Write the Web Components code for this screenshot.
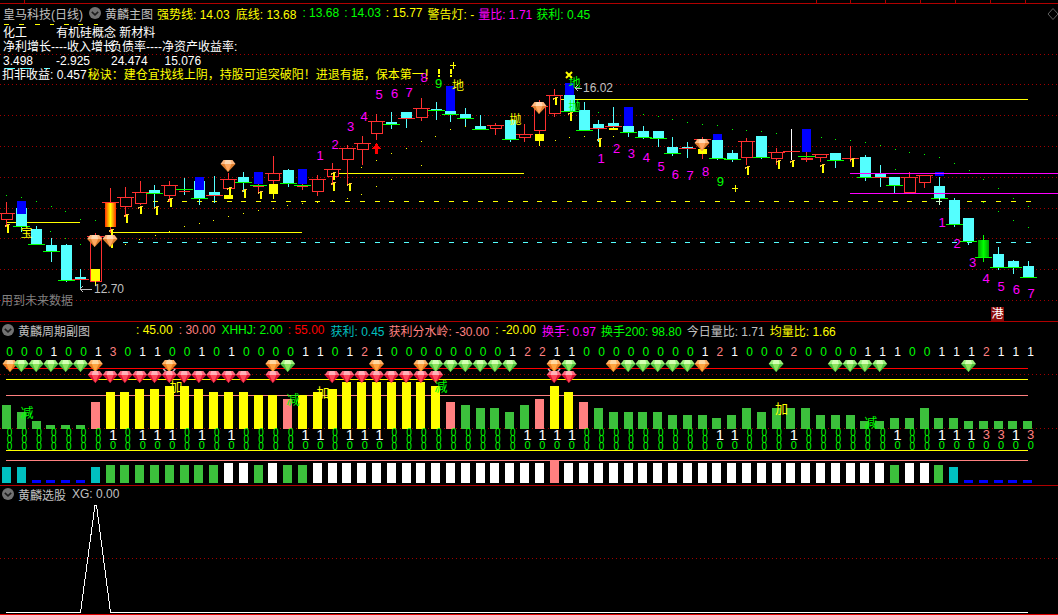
<!DOCTYPE html>
<html lang="zh-CN">
<head>
<meta charset="utf-8">
<title>皇马科技</title>
<style>
  html, body { margin: 0; background: #000; overflow: hidden; }
  body { font: 12px "Liberation Sans", "Noto Sans CJK SC", sans-serif; }
</style>
</head>
<body>
<stock-terminal>
  <chart-panel h="321">
    <legend-bar slot="legend" top="4" left="3">
      <legend-item color="#c0c0c0">皇马科技(日线)</legend-item>
      <status-icon></status-icon>
      <legend-item color="#c0c0c0" style="margin-left:-2px">黄麟主图</legend-item>
      <legend-item color="#ffff00" style="margin-left:-2px">强势线: 14.03</legend-item>
      <legend-item color="#ffff00">底线: 13.68</legend-item>
      <legend-item color="#00ff00">: 13.68</legend-item>
      <legend-item color="#00ff00" style="margin-left:-1px">: 14.03</legend-item>
      <legend-item color="#ffff00" style="margin-left:-1px">: 15.77</legend-item>
      <legend-item color="#ffff00" style="margin-left:-1px">警告灯: -</legend-item>
      <legend-item color="#ff00ff" style="margin-left:-2px">量比: 1.71</legend-item>
      <legend-item color="#00ff00" style="margin-left:-2px">获利: 0.45</legend-item>
    </legend-bar>
    <info-block slot="legend"></info-block>
    <kline-chart></kline-chart>
  </chart-panel>
  <chart-panel h="164" line="#b00000">
    <legend-bar slot="legend" top="0" left="2">
      <status-icon></status-icon>
      <legend-item color="#c0c0c0" style="margin-left:-2px">黄麟周期副图</legend-item>
      <legend-item color="#ffff00" style="margin-left:40px">: 45.00</legend-item>
      <legend-item color="#ff8080">: 30.00</legend-item>
      <legend-item color="#00ff00">XHHJ: 2.00</legend-item>
      <legend-item color="#ff0000" style="margin-left:-1px">: 55.00</legend-item>
      <legend-item color="#00c0c0">获利: 0.45</legend-item>
      <legend-item color="#ff8080" style="margin-left:-2px">获利分水岭: -30.00</legend-item>
      <legend-item color="#ffff00">: -20.00</legend-item>
      <legend-item color="#ff00ff">换手: 0.97</legend-item>
      <legend-item color="#00ff00" style="margin-left:-1px">换手200: 98.80</legend-item>
      <legend-item color="#c0c0c0" style="margin-left:-1px">今日量比: 1.71</legend-item>
      <legend-item color="#ffff00" style="margin-left:-1px">均量比: 1.66</legend-item>
    </legend-bar>
    <cycle-chart></cycle-chart>
  </chart-panel>
  <chart-panel h="130" line="#b00000">
    <legend-bar slot="legend" top="0" left="2">
      <status-icon></status-icon>
      <legend-item color="#c0c0c0" style="margin-left:-2px">黄麟选股</legend-item>
      <legend-item color="#c0c0c0">XG: 0.00</legend-item>
    </legend-bar>
    <signal-chart></signal-chart>
  </chart-panel>
</stock-terminal>

<script>
const STEP = 14.8
const FONT = '"Liberation Sans", "Noto Sans CJK SC", sans-serif'

const rect = (x, y, w, h, fill) => `<rect x="${x}" y="${y}" width="${w}" height="${h}" fill="${fill}"/>`
const hline = (y, x1, x2, color) => `<path d="M${x1} ${Math.floor(y) + 0.5}H${x2}" stroke="${color}"/>`
const vline = (x, y1, y2, color) => `<path d="M${x} ${y1}V${y2}" stroke="${color}"/>`
const dotted = (y) => `<path d="M0 ${y + 0.5}H1058" stroke="#a00000" stroke-dasharray="1 3"/>`
const label = (x, y, s, color, size) =>
  `<text x="${x}" y="${y}" fill="${color}" font-size="${size || 12}" text-anchor="middle" dominant-baseline="central">${s}</text>`

const GEMS = {
  green: ['#d4ffb4', '#9cf07c', '#4cc03c', '#8ce45c'],
  red: ['#ffb0b8', '#ff6a80', '#dc1030', '#ff4858'],
  orange: ['#ffd8a0', '#ffb468', '#e87c20', '#ffa440'],
  pale: ['#ffd8b0', '#ffb880', '#e08030', '#ffa860'],
}

function gem(x, y, type, cap) {
  const c = GEMS[type]
  let s = `<g transform="translate(${x} ${y})" shape-rendering="auto">`
  if (cap) {
    s += '<path d="M-6 3L0 9L6 3" fill="none" stroke="#c0c0c0" stroke-width="1.5"/>'
    s += '<path d="M-5 -4Q0 -9 5 -4Z" fill="#e8e8e8"/>'
  }
  s += `<polygon points="-4.5,-6 4.5,-6 7.5,-2 -7.5,-2" fill="${c[1]}"/>`
  s += `<polygon points="-2.5,-6 2.5,-6 3.5,-2 -3.5,-2" fill="${c[0]}"/>`
  s += `<polygon points="-7.5,-2 7.5,-2 0,6" fill="${c[2]}"/>`
  s += `<polygon points="-3.5,-2 3.5,-2 0,6" fill="${c[3]}"/>`
  return s + '</g>'
}

/* kind: c = cyan + green foot, r = cyan + red foot, h = hollow red, b = blue only */
const CANDLES = [
  ['h', 213, 219, 202, 227],
  ['c', 208, 226, 201, 232, { blue: [201, 214] }],
  ['c', 229, 244, 226, 245],
  ['c', 245, 251, 238, 262],
  ['c', 245, 280, 244, 282],
  ['r', 277, 279, 269, 290],
  ['h', 236, 281, 233, 281, { yellow: [269, 281], yw: 286 }],
  ['fire', 202, 227, 188, 233],
  ['h', 197, 206, 187, 217],
  ['h', 192, 203, 181, 205],
  ['c', 190, 193, 185, 208],
  ['h', 185, 195, 181, 202],
  ['doji', 189, 190, 178, 195],
  ['c', 181, 198, 177, 205, { blue: [177, 190] }],
  ['r', 192, 195, 176, 203],
  ['h', 179, 188, 173, 188, { yellow: [195, 199] }],
  ['c', 177, 182, 172, 192],
  ['b', 172, 184, 172, 193],
  ['h', 173, 180, 156, 184, { yellow: [184, 194], yw: 199 }],
  ['c', 170, 183, 169, 187],
  ['b', 169, 184, 169, 190],
  ['h', 179, 191, 175, 196],
  ['h', 169, 176, 163, 185],
  ['h', 148, 159, 145, 185],
  ['h', 143, 149, 136, 165],
  ['h', 121, 133, 114, 140],
  ['c', 122, 124, 112, 129],
  ['r', 112, 118, 112, 128],
  ['h', 108, 117, 98, 121],
  ['c', 109, 110, 102, 120],
  ['c', 111, 114, 86, 122, { blue: [86, 111] }],
  ['c', 114, 118, 108, 126],
  ['c', 126, 129, 115, 129],
  ['h', 125, 128, 123, 135],
  ['c', 120, 139, 120, 142],
  ['h', 134, 137, 124, 142],
  ['h', 106, 130, 100, 134, { yellow: [134, 141], yw: 146 }],
  ['h', 95, 113, 89, 117],
  ['c', 95, 111, 83, 112, { blue: [83, 95] }],
  ['c', 110, 130, 102, 130],
  ['r', 124, 128, 120, 142],
  ['r', 123, 126, 107, 128, { yellow: [128, 130] }],
  ['c', 126, 132, 107, 137, { blue: [107, 126] }],
  ['c', 131, 137, 126, 139],
  ['c', 131, 138, 131, 147],
  ['c', 147, 153, 137, 156],
  ['r', 147, 148, 142, 158],
  ['top', 139, 149, 137, 159, { yellow: [149, 154] }],
  ['c', 140, 158, 134, 160, { blue: [134, 140] }],
  ['c', 153, 159, 150, 162],
  ['h', 141, 157, 138, 165],
  ['c', 136, 157, 136, 159],
  ['h', 152, 158, 148, 165],
  ['mark', 151, 151, 129, 160],
  ['b', 129, 152, 129, 162, { foot: 156, small: [158, 159] }],
  ['h', 154, 157, 154, 162],
  ['c', 153, 160, 153, 168],
  ['top', 158, 162, 146, 162],
  ['c', 157, 177, 155, 181],
  ['r', 174, 177, 165, 187],
  ['c', 177, 185, 177, 193],
  ['h', 177, 192, 172, 192],
  ['h', 175, 182, 175, 188],
  ['c', 186, 198, 177, 205, { blue: [172, 176] }],
  ['c', 200, 224, 198, 227],
  ['c', 218, 241, 218, 245],
  ['grass', 240, 257, 235, 262],
  ['c', 254, 267, 247, 270],
  ['c', 261, 267, 260, 274],
  ['c', 266, 277, 261, 277],
]

const RED = '#ff3030'
const CYAN = '#54ffff'
const LIME = '#00ff00'
const YELLOW = '#ffff00'

function candle(d, i) {
  const [kind, top, bot, wt, wb, ex = {}] = d
  const x = Math.round(6.3 + STEP * i) + 0.5
  const left = x - 5.5
  let wick = CYAN
  if (kind === 'h' || kind === 'top' || kind === 'fire' || kind === 'b') wick = RED
  if (kind === 'grass') wick = LIME
  if (kind === 'mark') wick = '#ffffff'
  let s = vline(x, wt, wb, wick)
  if (kind === 'c' || kind === 'r') {
    s += rect(left, top, 11, bot - top, CYAN)
    s += hline(bot, x - 8.5, x + 8.5, kind === 'c' ? LIME : RED)
  } else if (kind === 'h') {
    s += `<rect x="${left}" y="${top + 0.5}" width="11" height="${bot - top}" fill="#000" stroke="${RED}"/>`
    s += hline(top, x - 8.5, x + 8.5, RED)
  } else if (kind === 'fire') {
    s += rect(left, top, 11, bot - top, 'url(#fire)')
    s += hline(top, x - 8.5, x + 8.5, RED)
  } else if (kind === 'grass') {
    s += rect(left, top, 11, bot - top, 'url(#grass)')
    s += hline(bot, x - 8.5, x + 8.5, LIME)
  } else if (kind === 'doji') {
    s += hline(top, x - 8.5, x + 8.5, LIME)
    s += hline(bot + 1, x - 5.5, x + 5.5, RED)
  } else if (kind === 'top' || kind === 'mark') {
    s += hline(top, x - 8.5, x + 8.5, RED)
  } else if (kind === 'b') {
    s += rect(left + 1, top, 9, bot - top, '#0000ff')
    s += hline(ex.foot || bot + 1, x - 8.5, x + 8.5, LIME)
    if (!ex.foot) s += hline(bot + 2, x - 5.5, x + 5.5, RED)
  }
  if (ex.blue) s += rect(left + 1, ex.blue[0], 9, ex.blue[1] - ex.blue[0], '#0000ff')
  if (ex.small) s += `<rect x="${left}" y="${ex.small[0]}.5" width="11" height="${ex.small[1] - ex.small[0]}" fill="none" stroke="${RED}"/>`
  if (ex.yellow) s += rect(left + 1, ex.yellow[0], 9, ex.yellow[1] - ex.yellow[0], YELLOW)
  if (ex.yw) s += vline(x, ex.yellow[1], ex.yw, YELLOW)
  return s
}

const ARROWS = [
  [8.4, 224, 233], [127, 214, 223], [141, 206, 214], [156.5, 206, 215], [171.4, 198, 207],
  [230, 187, 195], [245, 189, 198], [260.6, 191, 199], [334, 172, 180], [334, 182, 191],
  [349.5, 183, 191], [112, 229, 238], [112, 239, 248], [556, 97, 105], [571, 112, 121],
  [600.3, 138, 147], [748, 166, 175], [778.5, 160, 169], [793, 160, 167], [823.4, 164, 173],
  [852.5, 158, 167],
]
const upArrow = ([x, y1, y2]) => {
  const px = Math.round(x)
  return `<path d="M${px} ${y1}V${y2}" stroke="${YELLOW}" stroke-width="2"/><path d="M${px - 3} ${y1 + 2.5}L${px} ${y1}L${px + 2} ${y1 + 1}" fill="none" stroke="#ffc040"/>`
}

const YELLOW_DOTS = [[125,244],[139,239],[155,235],[169,231],[184,226],[199,223],[213,220],[228,216],[243,213],[258,210],[273,208],[287,205],[302,203],[317,202],[332,200],[347,198],[361,194],[376,186],[391,179],[406,173],[421,165],[361,167],[376,160],[391,153],[406,148],[421,141],[435,136],[450,129],[465,126],[540,120],[555,140],[569,137],[584,136],[613,136],[735,189]]
const GREEN_DOTS = [[6,195],[21,197],[36,201],[51,206],[65,211],[80,219],[95,220],[50,231],[65,238],[80,244],[95,249],[598,112],[643,114],[658,116],[672,119],[687,122],[702,124],[717,125],[732,129],[746,130],[761,131],[776,133],[821,137],[835,139],[850,140],[865,142],[880,145],[895,149],[909,152],[924,154],[939,157],[895,169],[954,163],[969,170],[983,179],[998,188],[1013,198],[1028,206],[998,211],[1013,220],[1028,227],[983,202]]

const MAGENTA = '#ff00ff'
const COUNTS = [
  ['1', 320, 155], ['2', 335, 144], ['3', 350.5, 126], ['4', 364, 116], ['5', 379, 94], ['6', 394.5, 93], ['7', 409, 92], ['8', 424, 77], ['9', 438.7, 83, LIME],
  ['1', 601, 158], ['2', 616.5, 148], ['3', 631.4, 153], ['4', 646.3, 157], ['5', 661, 166], ['6', 675.4, 174], ['7', 690, 175], ['8', 705.5, 171], ['9', 720.3, 181, LIME],
  ['1', 942, 222], ['2', 957, 243], ['3', 972.5, 262], ['4', 986, 278], ['5', 1001, 286], ['6', 1016.4, 289], ['7', 1031, 293],
]

const plus = (x, y, color) => `<path d="M${x - 3} ${y + 0.5}H${x + 3}M${x + 0.5} ${y - 3}V${y + 4}" stroke="${color}"/>`

class KlineChart extends HTMLElement {
  constructor() {
    super()
    const root = this.attachShadow({ mode: 'open' })
    let s = `<defs>
      <linearGradient id="fire"><stop offset="0" stop-color="#ff3000"/><stop offset=".5" stop-color="#ffff00"/><stop offset="1" stop-color="#ff3000"/></linearGradient>
      <linearGradient id="grass"><stop offset="0" stop-color="#00a000"/><stop offset=".5" stop-color="#00ff00"/><stop offset="1" stop-color="#00a000"/></linearGradient>
    </defs>`
    s += hline(3, 0, 1058, '#b00000')
    ;[24, 816, 850, 885, 920, 955, 990, 1025].forEach((x) => { s += vline(x + 0.5, 0, 3, '#b00000') })
    s += '<polygon points="1053,8.5 1058,14 1053,19.5 1048,14" fill="none" stroke="#606060" shape-rendering="auto"/>'
    ;[54, 84, 115, 146, 177, 208, 238, 269, 300].forEach((y) => { s += dotted(y) })
    ;[[4, 9], [19, 24], [35, 40], [50, 54], [64, 69], [78, 83], [94, 98]].forEach(([a, b]) => { s += hline(24, a, b, YELLOW) })
    ;[[5, 15], [20, 32], [44, 50]].forEach(([a, b]) => { s += hline(68, a, b, CYAN) })
    s += `<path d="M123 201.5H1032" stroke="${YELLOW}" stroke-dasharray="5 9.8"/>`
    s += `<path d="M123 242.5H1032" stroke="${CYAN}" stroke-dasharray="5 9.8"/>`
    s += hline(222, 6, 80, YELLOW) + hline(232, 111, 302, YELLOW) + hline(173, 332, 524, YELLOW) + hline(99, 556, 1028, YELLOW)
    YELLOW_DOTS.forEach(([x, y]) => { s += rect(x, y, 1, 1, YELLOW) })
    GREEN_DOTS.forEach(([x, y]) => { s += rect(x, y, 1, 1, LIME) })
    CANDLES.forEach((d, i) => { s += candle(d, i) })
    s += hline(173, 850, 1058, MAGENTA) + hline(193, 850, 1058, MAGENTA)
    ARROWS.forEach((a) => { s += upArrow(a) })
    s += `<path d="M376.5 143L381 149H378V154H375V149H372Z" fill="#ff0000"/>`
    ;[[94.6, 241], [110, 241], [228, 166], [539, 108], [702, 145]].forEach(([x, y]) => { s += gem(x, y, 'pale') })
    COUNTS.forEach(([t, x, y, c]) => { s += label(x, y, t, c || MAGENTA, 13) })
    s += label(458, 86, '地', YELLOW) + label(515.5, 120, '抛', YELLOW) + label(574.6, 83, '地', LIME) + label(574.6, 107, '抛', LIME) + label(26.4, 233, '宝', YELLOW)
    s += rect(438, 69, 2, 5, YELLOW) + rect(438, 75, 2, 2, YELLOW) + rect(450, 69, 2, 5, YELLOW) + rect(450, 75, 2, 2, YELLOW)
    s += plus(453, 65, YELLOW) + plus(735, 188, YELLOW) + plus(939, 201, '#d0ffd0')
    s += `<path d="M566 72L572 78M572 72L566 78" stroke="${YELLOW}" stroke-width="2" shape-rendering="auto"/>`
    s += `<path d="M575 88H582M575 88L578 85M575 88L578 91" stroke="#c0c0c0" fill="none"/><text x="583" y="88" fill="#c0c0c0" dominant-baseline="central">16.02</text>`
    s += `<path d="M80 289H92M80 289L83 286M80 289L83 292" stroke="#c0c0c0" fill="none"/><text x="94" y="289" fill="#c0c0c0" dominant-baseline="central">12.70</text>`
    s += `<text x="1" y="301" fill="#808080" dominant-baseline="central">用到未来数据</text>`
    s += rect(991, 307, 13, 14, '#8c0c0c') + label(997.5, 314, '港', '#ffffff')
    root.innerHTML = `<style>
      :host { display: block; height: 321px; }
      svg { display: block; font: 12px ${FONT}; }
    </style>
    <svg width="1058" height="321" viewBox="0 0 1058 321" shape-rendering="crispEdges">${s}</svg>`
  }
}

const DIGITS = '000100130110010100001101210000000012' + '2110000000012100020000111001112111'
const STACK_WHITE = [7, 9, 10, 11, 13, 15, 20, 21, 23, 24, 25, 35, 36, 37, 38, 48, 49, 53, 60, 63, 64, 65, 68]
const STACK_PINK = [66, 67, 69]
const HEIGHTS = [405,412,421,425,425,425,402,392,392,389,389,386,386,389,392,392,392,395,395,399,395,392,389,382,382,382,382,382,382,386,402,405,408,408,412,405,399,386,392,402,408,412,412,412,412,415,415,415,418,415,408,412,408,408,408,415,415,415,421,421,418,418,408,418,418,421,421,421,421,421]
const VOL = 'tt' + 'bbbb' + 't' + 'g'.repeat(8) + 'ww' + 'g' + 'w' + 'gg' + 'w'.repeat(16) + 'p' + 'w'.repeat(22) + 'g' + 'ww' + 'g' + 't' + 'bbbbb'
const ROW1 = { 0: 'orange', 1: 'green', 2: 'green', 3: 'green', 4: 'green', 5: 'green', 6: 'orange', 11: 'cap', 18: 'orange', 19: 'green', 25: 'orange', 28: 'orange', 29: 'green', 30: 'green', 31: 'green', 32: 'green', 33: 'green', 34: 'green', 37: 'cap', 38: 'green', 41: 'orange', 42: 'green', 43: 'green', 44: 'green', 45: 'green', 46: 'green', 47: 'orange', 52: 'green', 56: 'green', 57: 'green', 58: 'green', 59: 'green', 65: 'green' }
const ROW2 = [6, 7, 8, 9, 10, 11, 12, 13, 14, 15, 16, 18, 22, 23, 24, 25, 26, 27, 28, 29, 37, 38]

class CycleChart extends HTMLElement {
  constructor() {
    super()
    const root = this.attachShadow({ mode: 'open' })
    let s = dotted(374) + dotted(428)
    const barX = (i) => Math.round(2 + STEP * i)
    const midX = (i) => (6.5 + STEP * i).toFixed(1)
    const numX = (i) => (9.5 + STEP * i).toFixed(1)
    const digitColor = { 0: LIME, 1: '#ffffff', 2: '#ff8080', 3: '#ff8080' }
    s += hline(368, 6, 1028, '#ff0000') + hline(379, 6, 1028, YELLOW) + hline(395, 6, 1028, '#ff8080')
    s += hline(450, 6, 1028, YELLOW) + hline(460, 6, 1028, '#ff8080')
    for (let i = 0; i < 70; i += 1) {
      s += label(numX(i), 351.5, DIGITS[i], digitColor[DIGITS[i]])
      const top = HEIGHTS[i]
      let fill = '#3cc03c'
      if (i >= 7 && i <= 29 && i !== 19) fill = YELLOW
      if (i === 37 || i === 38) fill = YELLOW
      if (i === 6 || i === 19 || i === 30 || i === 36 || i === 39) fill = '#ff8080'
      s += rect(barX(i), top, 9, 429 - top, fill)
      if (STACK_WHITE.includes(i)) {
        s += label(numX(i), 434, '1', '#ffffff', 15) + label(numX(i), 445, '0', LIME, 11)
      } else if (STACK_PINK.includes(i)) {
        s += label(numX(i), 434, '3', '#ff8080', 13) + label(numX(i), 445, '0', LIME, 11)
      } else {
        s += label(numX(i), 432, '0', LIME, 10) + label(numX(i), 439, '0', LIME, 10) + label(numX(i), 446, '0', LIME, 10)
      }
      const vol = VOL[i]
      const tops = { t: 467, b: 480, g: 465, w: 463, p: 461 }
      const colors = { t: '#00c0c0', b: '#0000ff', g: '#3cc03c', w: '#ffffff', p: '#ff8080' }
      s += rect(barX(i), tops[vol], 9, 483 - tops[vol], colors[vol])
    }
    Object.keys(ROW1).forEach((k) => {
      const i = Number(k)
      const t = ROW1[k]
      const x = i === 0 ? 10 : midX(i)
      s += gem(x, 366, t === 'cap' ? 'orange' : t, t === 'cap')
    })
    ROW2.forEach((i) => { s += gem(midX(i), 377, 'red') })
    ;[[27, 412, '减', LIME], [176, 386, '加', YELLOW], [293, 399, '减', LIME], [323, 392, '加', YELLOW], [441, 386, '减', LIME], [781.5, 408, '加', YELLOW], [870.7, 422, '减', LIME]].forEach(([x, y, t, c]) => {
      s += label(x, y, t, c, 13)
    })
    root.innerHTML = `<style>
      :host { display: block; height: 164px; }
      svg { display: block; font: 12px ${FONT}; }
    </style>
    <svg width="1058" height="164" viewBox="0 321 1058 164" shape-rendering="crispEdges">${s}</svg>`
  }
}

class SignalChart extends HTMLElement {
  constructor() {
    super()
    const root = this.attachShadow({ mode: 'open' })
    root.innerHTML = `<style>
      :host { display: block; height: 130px; }
      svg { display: block; }
    </style>
    <svg width="1058" height="130" viewBox="0 485 1058 130" shape-rendering="crispEdges">
      ${dotted(558)}${hline(614, 0, 1058, '#e00000')}
      <path d="M6 612.5H80.5L95 505L96.5 505L110.5 612.5H1028" fill="none" stroke="#ffffff"/>
    </svg>`
  }
}

class StatusIcon extends HTMLElement {
  constructor() {
    super()
    this.attachShadow({ mode: 'open' }).innerHTML = `<style>
      :host { display: block; width: 12px; height: 12px; }
      svg { display: block; }
    </style>
    <svg width="12" height="12" viewBox="0 0 12 12">
      <circle cx="6" cy="6" r="6" fill="#727272"/>
      <path d="M2.8 4.8L6 7.8L9.2 4.8" fill="none" stroke="#1c1c1c" stroke-width="1.6"/>
    </svg>`
  }
}

class LegendItem extends HTMLElement {
  constructor() {
    super()
    this.attachShadow({ mode: 'open' }).innerHTML = `<style>
      :host { display: block; white-space: nowrap; color: var(--item-color, #c0c0c0); }
    </style><slot></slot>`
  }

  connectedCallback() {
    this.style.setProperty('--item-color', this.getAttribute('color'))
  }
}

class LegendBar extends HTMLElement {
  constructor() {
    super()
    this.attachShadow({ mode: 'open' }).innerHTML = `<style>
      :host { position: absolute; display: flex; align-items: center; gap: 6px; height: 18px; line-height: 18px; font: 12px ${FONT}; }
    </style><slot></slot>`
  }

  connectedCallback() {
    this.style.top = `${this.getAttribute('top')}px`
    this.style.left = `${this.getAttribute('left')}px`
  }
}

const infoTemplate = document.createElement('template')
infoTemplate.innerHTML = `
  <style>
    :host { position: absolute; top: 26px; left: 3px; display: block; color: #fff; font: 12px/14px ${FONT}; white-space: nowrap; }
    .row { display: flex; height: 14px; }
    .a { width: 53px; }
    .b { width: 55px; }
    .c { width: 53.5px; }
    .tight { margin-right: -5px; }
    .tip { color: #ff0; margin-left: 1px; }
    .shift { margin-left: -1px; }
  </style>
  <div class="row"><span class="a">化工</span><span>有机硅概念 新材料</span></div>
  <div class="row"><span class="tight">净利增长----收入增长</span><span>负债率----净资产收益率:</span></div>
  <div class="row"><span class="a">3.498</span><span class="b">-2.925</span><span class="c">24.474</span><span>15.076</span></div>
  <div class="row shift"><span>扣非收益: 0.457</span><span class="tip">秘诀：建仓宜找线上阴，持股可追突破阳！进退有据，保本第一！</span></div>
`

class InfoBlock extends HTMLElement {
  constructor() {
    super()
    this.attachShadow({ mode: 'open' }).appendChild(infoTemplate.content.cloneNode(true))
  }
}

class ChartPanel extends HTMLElement {
  constructor() {
    super()
    this.attachShadow({ mode: 'open' }).innerHTML = `<style>
      :host { display: block; position: relative; }
      .mark { position: absolute; left: 0; right: 0; top: 0; height: 1px; z-index: 1; }
    </style><div class="mark"></div><slot></slot><slot name="legend"></slot>`
  }

  connectedCallback() {
    this.style.height = `${this.getAttribute('h')}px`
    if (this.hasAttribute('line')) this.shadowRoot.querySelector('.mark').style.background = this.getAttribute('line')
  }
}

class StockTerminal extends HTMLElement {
  constructor() {
    super()
    this.attachShadow({ mode: 'open' }).innerHTML = `<style>
      :host { display: flex; flex-direction: column; width: 1058px; height: 615px; overflow: hidden; background: #000; }
    </style><slot></slot>`
  }
}

customElements.define('kline-chart', KlineChart)
customElements.define('cycle-chart', CycleChart)
customElements.define('signal-chart', SignalChart)
customElements.define('status-icon', StatusIcon)
customElements.define('legend-item', LegendItem)
customElements.define('legend-bar', LegendBar)
customElements.define('info-block', InfoBlock)
customElements.define('chart-panel', ChartPanel)
customElements.define('stock-terminal', StockTerminal)
</script>
</body>
</html>
